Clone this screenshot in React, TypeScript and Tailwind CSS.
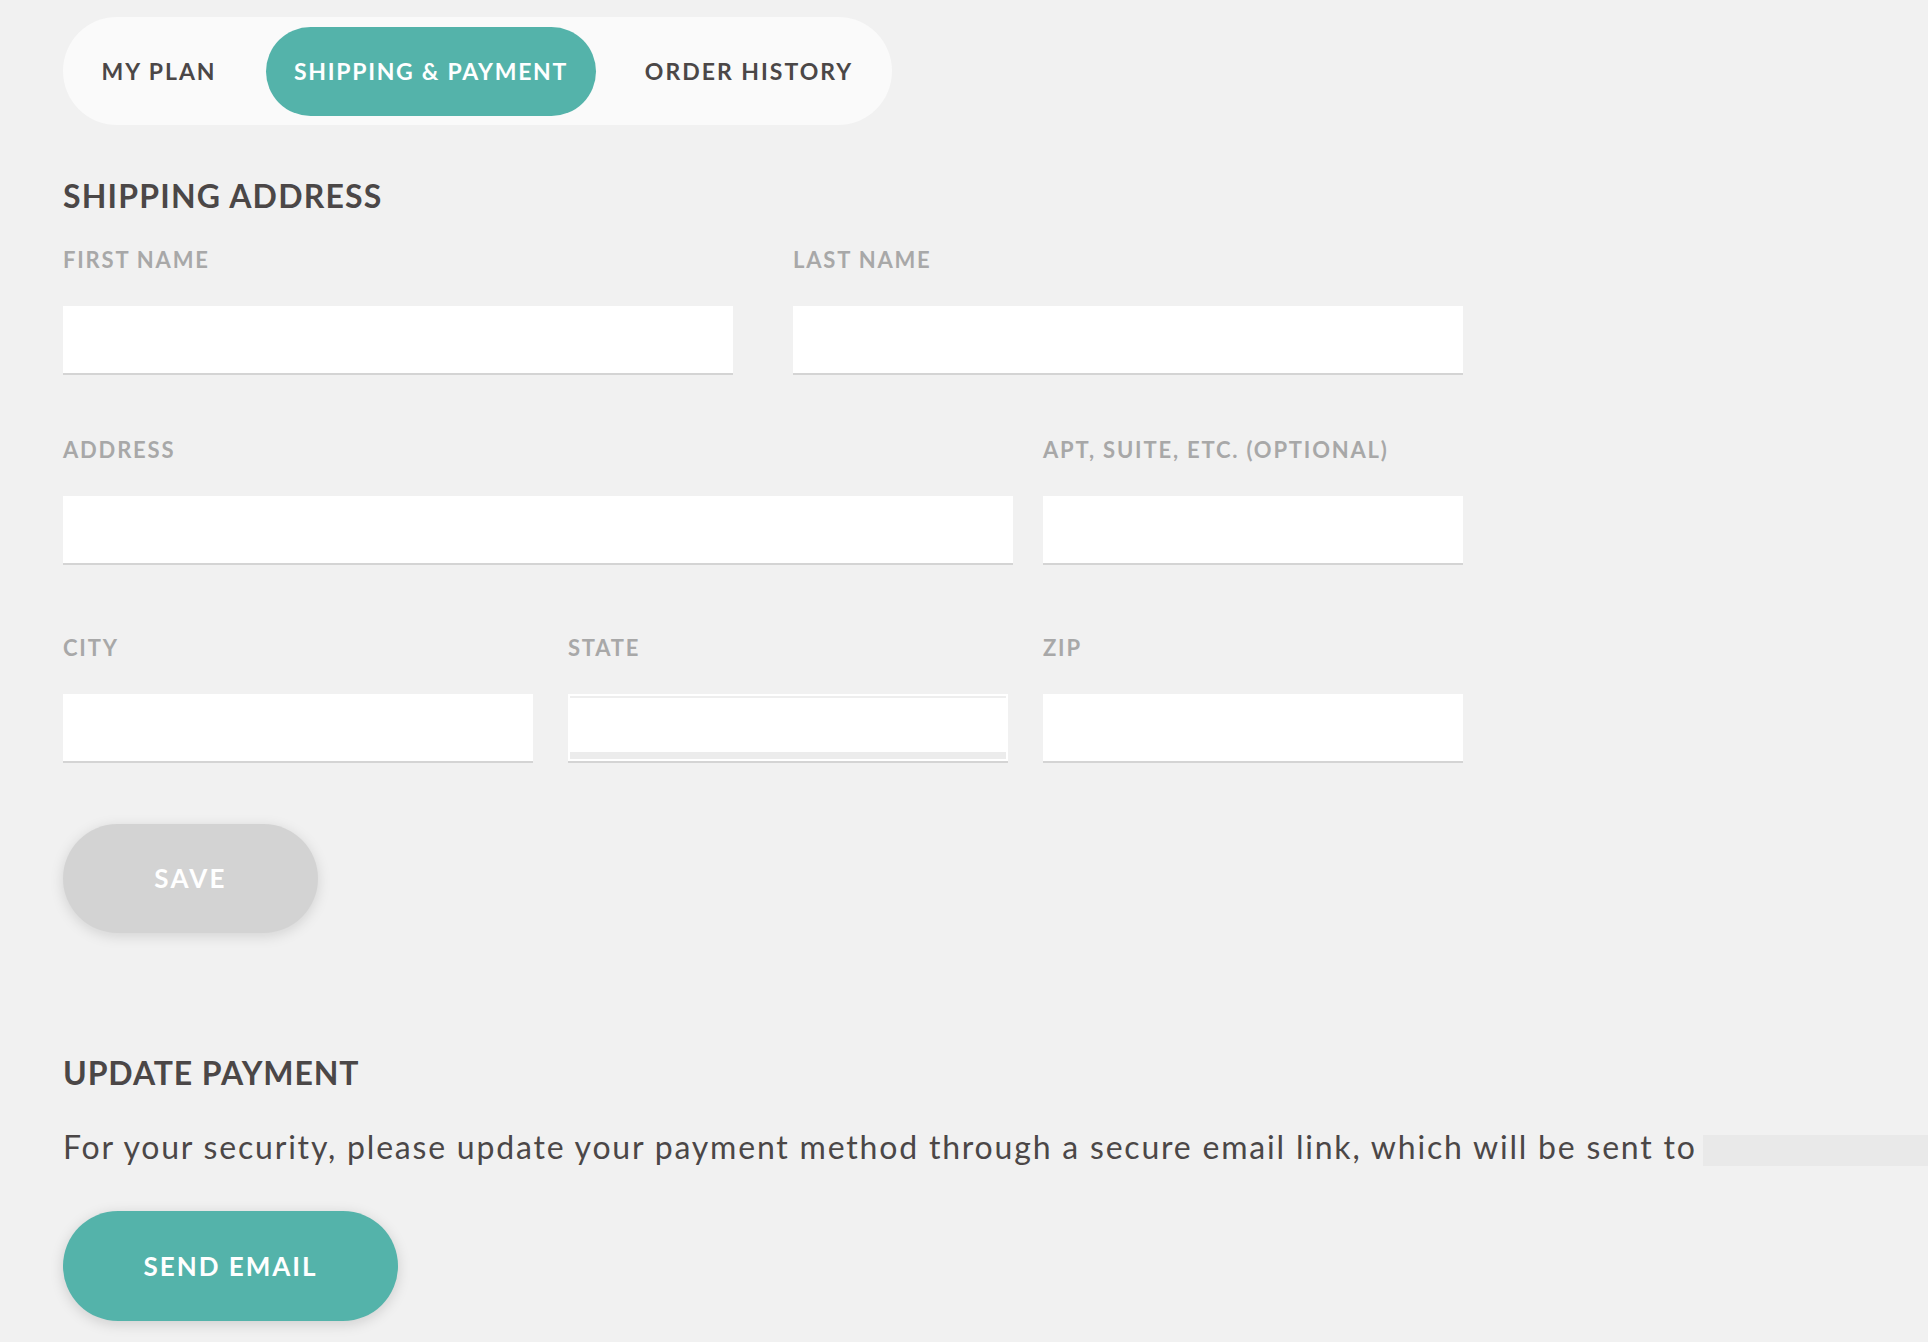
import React from "react";

const tabs = [
  { label: "MY PLAN", width: "w-[172px]" },
  { label: "SHIPPING & PAYMENT", width: "w-[330px]", active: true },
  { label: "ORDER HISTORY", width: "w-[264px]" },
];

function Field({ label, width, select }: { label: string; width: string; select?: boolean }) {
  return (
    <div className={`${width} shrink-0`}>
      <div className="text-[22px] leading-[22px] font-bold tracking-[1.8px] text-[#a8a8a8] whitespace-nowrap">
        {label}
      </div>
      {select ? (
        <div className="mt-[35px] h-[69px] bg-white p-[2px] border-b-2 border-[#d4d4d4] flex flex-col">
          <div className="h-[2px] bg-[#eeeeee]" />
          <div className="flex-1 bg-white" />
          <div className="h-[7px] bg-[#ececec]" />
        </div>
      ) : (
        <div className="mt-[35px] h-[69px] bg-white border-b-2 border-[#d4d4d4]" />
      )}
    </div>
  );
}

export default function App() {
  return (
    <div className="min-h-screen w-full overflow-hidden bg-[#f1f1f1] pl-[63px] pt-[17px] font-['Lato',sans-serif] text-[#4b4747]">
      <nav className="w-[829px] h-[108px] rounded-full bg-[#fafafa] px-[10px] flex items-center gap-[21px]">
        {tabs.map((t) => (
          <button
            key={t.label}
            className={`${t.width} h-[89px] rounded-full flex items-center justify-center text-[23px] font-bold whitespace-nowrap ${
              t.active ? "bg-[#54b3aa] text-white tracking-[1.7px]" : "text-[#4b4747] tracking-[2px]"
            }`}
          >
            {t.label}
          </button>
        ))}
      </nav>

      <h2 className="mt-[55px] text-[32px] leading-[32px] font-bold tracking-[1.2px]">SHIPPING ADDRESS</h2>

      <div className="mt-[37px] w-[1400px] flex gap-[60px]">
        <Field label="FIRST NAME" width="w-[670px]" />
        <Field label="LAST NAME" width="w-[670px]" />
      </div>

      <div className="mt-[64px] w-[1400px] flex gap-[30px]">
        <Field label="ADDRESS" width="w-[950px]" />
        <Field label="APT, SUITE, ETC. (OPTIONAL)" width="w-[420px]" />
      </div>

      <div className="mt-[72px] w-[1400px] flex gap-[35px]">
        <Field label="CITY" width="w-[470px]" />
        <Field label="STATE" width="w-[440px]" select />
        <Field label="ZIP" width="w-[420px]" />
      </div>

      <button className="mt-[61px] w-[255px] h-[109px] rounded-full bg-[#d3d3d3] text-white text-[26px] font-bold tracking-[2.2px] shadow-[0_3px_14px_rgba(0,0,0,0.13)]">
        SAVE
      </button>

      <h2 className="mt-[124px] text-[32px] leading-[32px] font-bold tracking-[0.9px]">UPDATE PAYMENT</h2>

      <div className="mt-[42px] flex items-start whitespace-nowrap text-[32px] leading-[32px] tracking-[1.8px]">
        <span>
          For your security, please update your payment method through a secure email link, which will be sent to
        </span>
        <div className="ml-[6px] mt-[4px] h-[31px] w-[300px] shrink-0 bg-[#e9e9e9]" />
      </div>

      <button className="mt-[45px] w-[335px] h-[110px] rounded-full bg-[#54b3aa] text-white text-[26px] font-bold tracking-[2px] shadow-[0_3px_14px_rgba(0,0,0,0.15)]">
        SEND EMAIL
      </button>
    </div>
  );
}
